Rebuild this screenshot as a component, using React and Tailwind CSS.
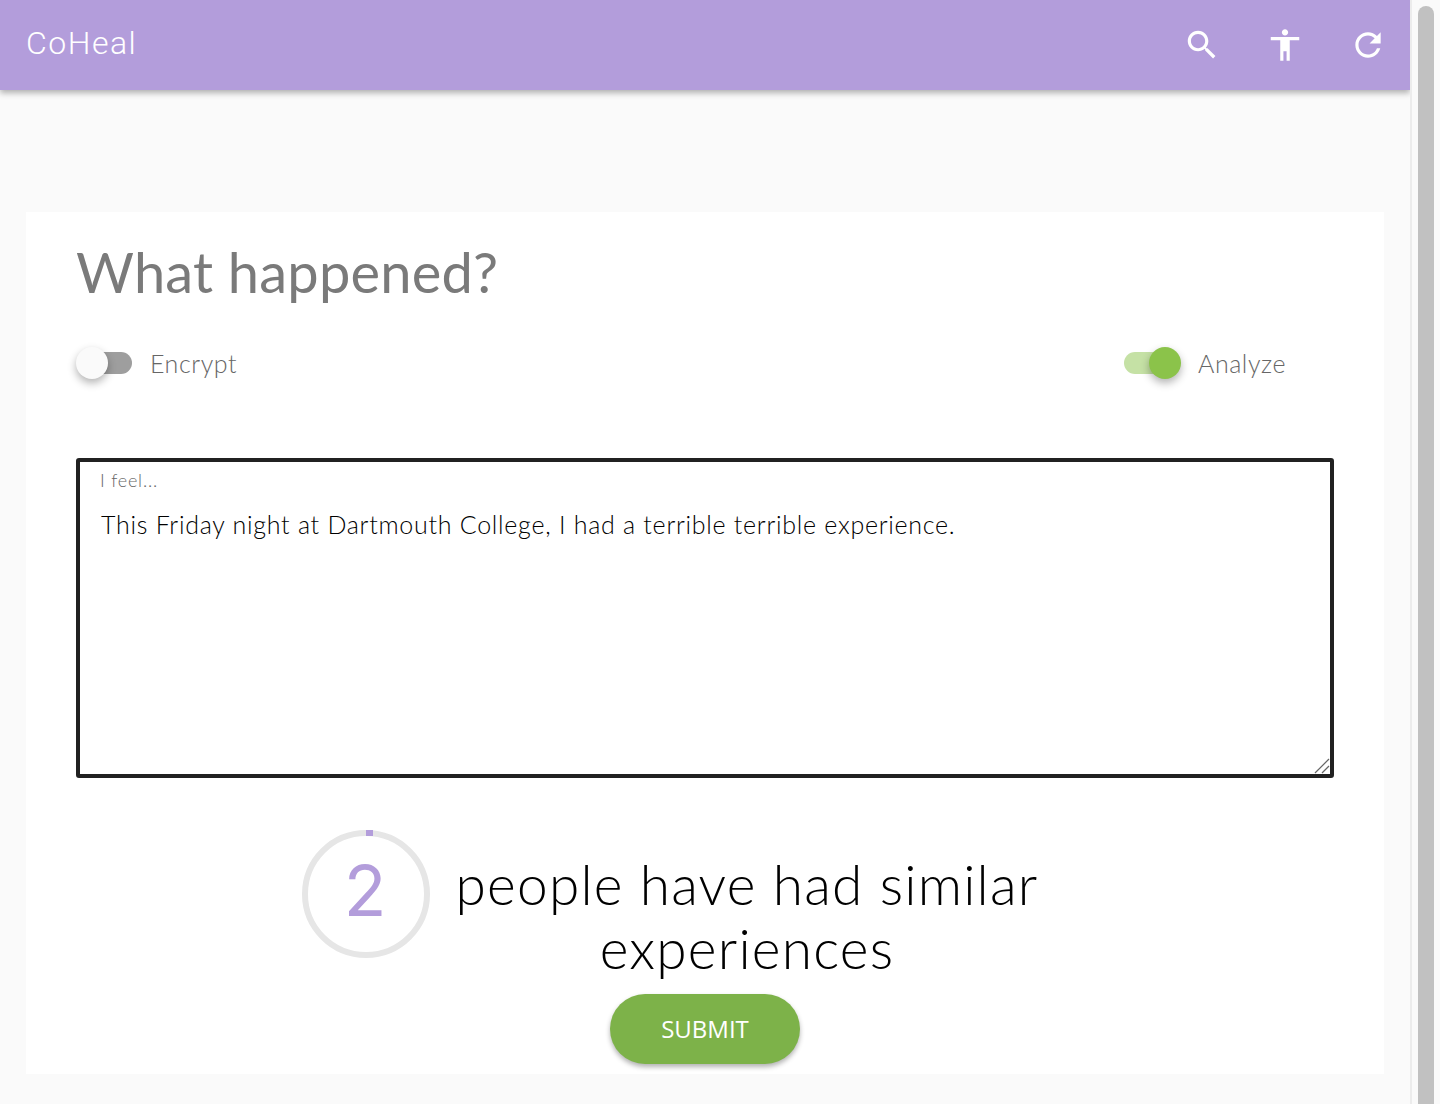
const IconButton = ({ d, shift }) => (
	<button className={"w-[83.5px] h-[90px] flex items-center justify-center " + (shift ? "pl-[1px]" : "")}>
		<svg width="38" height="38" viewBox="0 0 24 24" fill="#fff">
			<path d={d} />
		</svg>
	</button>
);

const Toggle = ({ on, label }) => (
	<div className="flex items-center">
		<div className={"relative w-[52px] h-[22px] rounded-full " + (on ? "bg-[#c5e1a5]" : "ml-[4px] bg-[#9e9e9e]")}>
			<div
				className={
					"absolute top-[-5px] w-[32px] h-[32px] rounded-full shadow-[0_4px_8px_rgba(0,0,0,0.3)] " +
					(on ? "right-[-5px] bg-[#8bc34a]" : "left-[-4px] bg-[#fafafa]")
				}
			/>
		</div>
		<span className={"text-[25px] leading-none font-light text-[#666] tracking-[0.55px] " + (on ? "ml-[22px]" : "ml-[18px]")}>
			{label}
		</span>
	</div>
);

const Counter = () => (
	<div className="relative w-[128px] h-[128px] shrink-0 flex items-center justify-center">
		<svg className="absolute inset-0" width="128" height="128" viewBox="0 0 128 128" fill="none">
			<circle cx="64" cy="64" r="61" stroke="#e6e6e6" strokeWidth="6" />
			<rect x="64" y="0" width="7" height="6" fill="#b39ddb" />
		</svg>
		<span className="text-[70px] leading-none font-['Inter',sans-serif] font-normal text-[#b39ddb] mr-[2px] mb-[6px]">2</span>
	</div>
);

export default function App() {
	return (
		<div className="flex h-[1104px] overflow-hidden font-['Lato',sans-serif]">
			<div className="w-[1410px] h-full bg-[#fafafa]">
				<header className="h-[90px] bg-[#b39ddb] flex items-center justify-between shadow-[0_3px_6px_rgba(0,0,0,0.3)]">
					<h1 className="ml-[26px] mb-[4px] text-[32px] leading-none font-light text-white font-['Roboto',sans-serif] tracking-[1.5px]">CoHeal</h1>
					<div className="flex">
						<IconButton shift d="M15.5 14h-.79l-.28-.27C15.41 12.59 16 11.11 16 9.5 16 5.91 13.09 3 9.5 3S3 5.91 3 9.5 5.91 16 9.5 16c1.61 0 3.09-.59 4.23-1.57l.27.28v.79l5 4.99L20.49 19l-4.99-5zm-6 0C7.01 14 5 11.99 5 9.5S7.01 5 9.5 5 14 7.01 14 9.5 11.99 14 9.5 14z" />
						<IconButton d="M12 2c1.1 0 2 .9 2 2s-.9 2-2 2-2-.9-2-2 .9-2 2-2zm9 7h-6v13h-2v-6h-2v6H9V9H3V7h18v2z" />
						<IconButton d="M17.65 6.35C16.2 4.9 14.21 4 12 4c-4.42 0-7.99 3.58-7.99 8s3.57 8 7.99 8c3.73 0 6.84-2.55 7.73-6h-2.08c-.82 2.33-3.04 4-5.65 4-3.31 0-6-2.69-6-6s2.69-6 6-6c1.66 0 3.14.69 4.22 1.78L13 11h7V4l-2.35 2.35z" />
					</div>
				</header>

				<main className="mt-[122px] ml-[26px] w-[1358px] h-[862px] bg-white px-[50px] pt-[27px]">
					<h2 className="text-[56px] leading-[66px] text-[#7a7a7a] tracking-[0.2px]">What happened?</h2>

					<div className="mt-[42px] h-[32px] flex items-center justify-between pr-[48px]">
						<Toggle label="Encrypt" />
						<Toggle on label="Analyze" />
					</div>

					<div className="relative mt-[79px]">
						<label className="absolute left-[24px] top-[12px] text-[18px] leading-[20px] font-light text-[#666] tracking-[0.8px]">I feel...</label>
						<textarea
							className="block w-[1258px] h-[320px] resize-none border-4 border-[#212121] rounded-[3px] pt-[45px] pl-[21px] text-[25px] leading-[34px] font-light text-black tracking-[0.73px] outline-none"
							defaultValue="This Friday night at Dartmouth College, I had a terrible terrible experience."
						/>
						<svg className="absolute right-[4px] bottom-[4px]" width="16" height="16" viewBox="0 0 16 16" fill="none" stroke="#666" strokeWidth="1.2">
							<path d="M1 15 L15 1" />
							<path d="M8 15 L15 8" />
						</svg>
					</div>

					<div className="mt-[52px] pl-[226px] flex items-start">
						<Counter />
						<p className="ml-[17px] mt-[22px] w-[600px] text-center text-[55px] leading-[64px] font-light text-black tracking-[1.2px]">
							people have had similar experiences
						</p>
					</div>

					<div className="mt-[14px] flex justify-center">
						<button className="w-[190px] h-[70px] rounded-full bg-[#7db249] text-white text-[24px] font-['Open_Sans',sans-serif] shadow-[0_3px_5px_rgba(0,0,0,0.3)]">
							SUBMIT
						</button>
					</div>
				</main>
			</div>

			<div className="w-[30px] h-full bg-[#fafafa] border-l-2 border-[#ececec] pl-[6px] pt-[6px]">
				<div className="w-[16px] h-[1200px] rounded-full bg-[#c1c1c1]" />
			</div>
		</div>
	);
}
